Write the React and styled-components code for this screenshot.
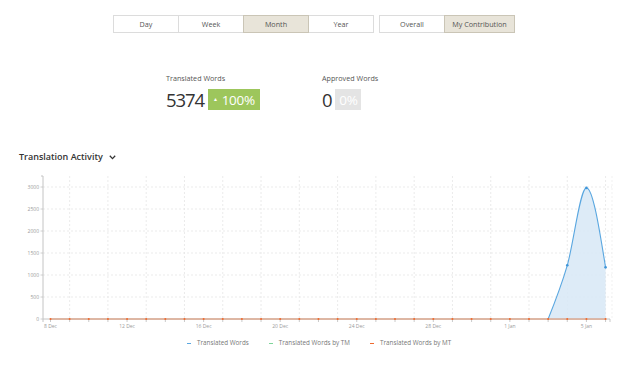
import React from "react";
import styled, { createGlobalStyle } from "styled-components";

const Global = createGlobalStyle`
  html, body { margin: 0; padding: 0; background: #fff; }
  body { font-family: "Open Sans", "Liberation Sans", sans-serif; color: #333; }
`;

const Page = styled.div`
  width: 640px;
  height: 365px;
  overflow: hidden;
  display: flex;
  flex-direction: column;
`;

const Toolbar = styled.div`
  display: flex;
  gap: 5px;
  padding: 15px 0 0 113px;
`;

const ButtonGroup = styled.div`
  display: flex;
`;

const SegButton = styled.div`
  box-sizing: border-box;
  width: ${(p) => p.$w || 66}px;
  height: 18px;
  display: flex;
  align-items: center;
  justify-content: center;
  font-size: 7.2px;
  color: #555;
  background: ${(p) => (p.$active ? "#e8e4d9" : "#fff")};
  border: 1px solid ${(p) => (p.$active ? "#cac5b6" : "#dcdcdc")};
  margin-left: -1px;
  position: relative;
  z-index: ${(p) => (p.$active ? 1 : 0)};
  &:first-child { margin-left: 0; }
`;

const Stats = styled.div`
  display: flex;
  padding: 41px 0 0 166px;
`;

const Stat = styled.div`
  width: ${(p) => p.$w}px;
  display: flex;
  flex-direction: column;
  gap: 6px;
`;

const StatLabel = styled.div`
  font-size: 7.2px;
  line-height: 9px;
  color: #555;
`;

const StatRow = styled.div`
  display: flex;
  align-items: center;
  gap: 4px;
  height: 21px;
`;

const StatValue = styled.div`
  font-size: 18.5px;
  letter-spacing: -1.1px;
  color: #333;
  line-height: 21px;
`;

const Badge = styled.div`
  box-sizing: border-box;
  height: 21px;
  width: ${(p) => p.$w}px;
  display: flex;
  align-items: center;
  justify-content: center;
  gap: 4px;
  background: ${(p) => (p.$tone === "green" ? "#9dc65c" : "#e4e4e4")};
  color: #fff;
  font-size: 13.5px;
  letter-spacing: -0.3px;
`;

const Arrow = styled.span`
  font-size: 5px;
  line-height: 1;
`;

const SectionTitle = styled.div`
  display: flex;
  align-items: center;
  gap: 6px;
  padding: 41px 0 0 19px;
  font-size: 9px;
  font-weight: 600;
  line-height: 12px;
  color: #333;
`;

const ChartSvg = styled.svg`
  display: block;
  margin-top: 7px;
`;

const Legend = styled.div`
  display: flex;
  gap: 20px;
  padding: 7px 0 0 187px;
`;

const LegendItem = styled.div`
  display: flex;
  align-items: center;
  gap: 6px;
  font-size: 6.3px;
  line-height: 8px;
  color: #777;
`;

const LegendSwatch = styled.span`
  width: 4px;
  height: 1px;
  background: ${(p) => p.$color};
`;

const TOP = 170;
const DAY = 19.14;
const X0 = 50.5;
const xOf = (i) => X0 + i * DAY;
const yOf = (v) => 319 - TOP - v * 0.044;

const N = 30;
const blue = Array.from({ length: N }, (_, i) =>
  i === 27 ? 1220 : i === 28 ? 2980 : i === 29 ? 1174 : 0
);

function monotonePath(pts) {
  const n = pts.length;
  const h = [], s = [];
  for (let i = 0; i < n - 1; i++) {
    h.push(pts[i + 1][0] - pts[i][0]);
    s.push((pts[i + 1][1] - pts[i][1]) / h[i]);
  }
  const m = new Array(n).fill(0);
  for (let i = 1; i < n - 1; i++) {
    const s0 = s[i - 1], s1 = s[i];
    const p = (s0 * h[i] + s1 * h[i - 1]) / (h[i - 1] + h[i]);
    m[i] =
      (Math.sign(s0) + Math.sign(s1)) *
        Math.min(Math.abs(s0), Math.abs(s1), 0.5 * Math.abs(p)) || 0;
  }
  m[0] = (3 * s[0] - m[1]) / 2;
  m[n - 1] = (3 * s[n - 2] - m[n - 2]) / 2;
  let d = `M${pts[0][0]},${pts[0][1]}`;
  for (let i = 0; i < n - 1; i++) {
    const [x0, y0] = pts[i];
    const [x1, y1] = pts[i + 1];
    const t = h[i] / 3;
    d += ` C${x0 + t},${y0 + m[i] * t} ${x1 - t},${y1 - m[i + 1] * t} ${x1},${y1}`;
  }
  return d;
}

const dateLabels = [
  [0, "8 Dec"], [4, "12 Dec"], [8, "16 Dec"], [12, "20 Dec"],
  [16, "24 Dec"], [20, "28 Dec"], [24, "1 Jan"], [28, "5 Jan"],
];

function Chart() {
  const blueSeg = blue.slice(26).map((v, k) => [xOf(26 + k), yOf(v)]);
  const linePath = monotonePath(blueSeg);
  const base = yOf(0);
  const areaPath = `${linePath} L${xOf(29)},${base} L${xOf(26)},${base} Z`;
  const yTicks = [0, 500, 1000, 1500, 2000, 2500, 3000];
  const vGrid = [];
  for (let x = X0 + DAY; x < 612; x += DAY * 2) vGrid.push(x);
  return (
    <ChartSvg width="640" height="162" viewBox="0 0 640 162">
      {yTicks.slice(1).map((v) => (
        <line key={v} x1="43" x2="612" y1={yOf(v)} y2={yOf(v)} stroke="#e6e6e6" strokeWidth="0.8" strokeDasharray="2 2" />
      ))}
      {vGrid.map((x) => (
        <line key={x} x1={x} x2={x} y1="6" y2={base} stroke="#e6e6e6" strokeWidth="0.8" strokeDasharray="2 2" />
      ))}
      <line x1="612" x2="612" y1="6" y2={base} stroke="#eeeeee" strokeWidth="0.8" strokeDasharray="2 2" />
      <line x1="43" x2="43" y1="6" y2="152" stroke="#c4c4c4" strokeWidth="1" />
      <line x1="41" x2="43" y1="6" y2="6" stroke="#c4c4c4" strokeWidth="1" />
      {yTicks.map((v) => (
        <g key={v}>
          <line x1="40.5" x2="43" y1={yOf(v)} y2={yOf(v)} stroke="#c4c4c4" strokeWidth="0.8" />
          <text x="39" y={yOf(v) + 1.7} textAnchor="end" fontSize="5" fill="#9a9a9a" fontFamily="Open Sans, sans-serif">{v}</text>
        </g>
      ))}
      <line x1="43" x2="610" y1={base} y2={base} stroke="#c4c4c4" strokeWidth="1" />
      {Array.from({ length: N }, (_, i) => (
        <line key={i} x1={xOf(i)} x2={xOf(i)} y1={base} y2={base + 3} stroke="#bdbdbd" strokeWidth="0.8" />
      ))}
      <line x1="610" x2="610" y1={base} y2={base + 3} stroke="#bdbdbd" strokeWidth="0.8" />
      {dateLabels.map(([i, t]) => (
        <text key={t} x={xOf(i)} y={base + 8.5} textAnchor="middle" fontSize="5" fill="#9a9a9a" fontFamily="Open Sans, sans-serif">{t}</text>
      ))}
      <path d={areaPath} fill="#d7e8f6" fillOpacity="0.85" />
      <path d={linePath} fill="none" stroke="#5aa7e0" strokeWidth="1.1" />
      <line x1={xOf(0)} x2={xOf(29)} y1={base} y2={base} stroke="#d98b66" strokeWidth="1.1" />
      {Array.from({ length: N }, (_, i) => (
        <circle key={i} cx={xOf(i)} cy={base} r="1" fill="#ef6a2f" />
      ))}
      {[27, 28, 29].map((i) => (
        <circle key={i} cx={xOf(i)} cy={yOf(blue[i])} r="1.3" fill="#3f95d8" />
      ))}
    </ChartSvg>
  );
}

export default function App() {
  return (
    <Page>
      <Global />
      <Toolbar>
        <ButtonGroup>
          <SegButton>Day</SegButton>
          <SegButton>Week</SegButton>
          <SegButton $active>Month</SegButton>
          <SegButton>Year</SegButton>
        </ButtonGroup>
        <ButtonGroup>
          <SegButton>Overall</SegButton>
          <SegButton $active $w={71}>My Contribution</SegButton>
        </ButtonGroup>
      </Toolbar>
      <Stats>
        <Stat $w={156}>
          <StatLabel>Translated Words</StatLabel>
          <StatRow>
            <StatValue>5374</StatValue>
            <Badge $tone="green" $w={52}>
              <Arrow>▲</Arrow>100%
            </Badge>
          </StatRow>
        </Stat>
        <Stat $w={120}>
          <StatLabel>Approved Words</StatLabel>
          <StatRow>
            <StatValue>0</StatValue>
            <Badge $w={26}>0%</Badge>
          </StatRow>
        </Stat>
      </Stats>
      <SectionTitle>
        Translation Activity
        <svg width="7" height="5" viewBox="0 0 7 5">
          <path d="M0.8 0.8 L3.5 3.6 L6.2 0.8" fill="none" stroke="#333" strokeWidth="1.3" />
        </svg>
      </SectionTitle>
      <Chart />
      <Legend>
        <LegendItem><LegendSwatch $color="#5aa7e0" />Translated Words</LegendItem>
        <LegendItem><LegendSwatch $color="#7ed59a" />Translated Words by TM</LegendItem>
        <LegendItem><LegendSwatch $color="#ef6a2f" />Translated Words by MT</LegendItem>
      </Legend>
    </Page>
  );
}
